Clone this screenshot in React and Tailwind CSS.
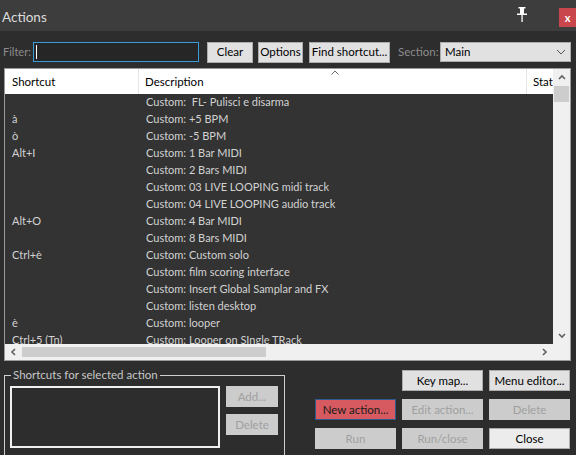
import React from "react";

const rows = [
  ["", "Custom:  FL- Pulisci e disarma"],
  ["à", "Custom: +5 BPM"],
  ["ò", "Custom: -5 BPM"],
  ["Alt+I", "Custom: 1 Bar MIDI"],
  ["", "Custom: 2 Bars MIDI"],
  ["", "Custom: 03 LIVE LOOPING midi track"],
  ["", "Custom: 04 LIVE LOOPING audio track"],
  ["Alt+O", "Custom: 4 Bar MIDI"],
  ["", "Custom: 8 Bars MIDI"],
  ["Ctrl+è", "Custom: Custom solo"],
  ["", "Custom: film scoring interface"],
  ["", "Custom: Insert Global Samplar and FX"],
  ["", "Custom: listen desktop"],
  ["è", "Custom: looper"],
  ["Ctrl+5 (Tn)", "Custom: Looper on SIngle TRack"],
];

const Chevron = ({ dir, className }) => {
  const paths = {
    up: "M1 5 L4 2 L7 5",
    down: "M1 2 L4 5 L7 2",
    left: "M5 1 L2 4 L5 7",
    right: "M2 1 L5 4 L2 7",
  };
  return (
    <svg width="8" height="8" viewBox="0 0 8 8" className={className}>
      <path d={paths[dir]} fill="none" stroke="#606060" strokeWidth="1.6" />
    </svg>
  );
};

const Btn = ({ children, disabled, variant, className = "" }) => {
  let style = "bg-[#e1e1e1] border-[#adadad] text-black";
  if (disabled) style = "bg-[#cccccc] border-[#cccccc] text-[#a0a0a0]";
  if (variant === "red") style = "bg-[#d65a60] border-[#2e5a8e] text-[#1a1a1a]";
  if (variant === "light") style = "bg-[#ececec] border-[#adadad] text-black";
  return (
    <div
      className={`flex items-center justify-center h-[21px] border text-[11.5px] leading-none whitespace-nowrap ${style} ${className}`}
    >
      {children}
    </div>
  );
};

export default function App() {
  return (
    <div
      className="w-[576px] h-[455px] bg-[#2d2d2d] flex flex-col overflow-hidden text-[11px]"
      style={{ fontFamily: 'Lato, "Liberation Sans", Arial, sans-serif' }}
    >
      {/* title bar */}
      <div className="h-[31px] bg-[#3d3d3d] flex items-start shrink-0">
        <div className="pl-[2px] pt-[7px] text-[13.5px] text-[#dcdcdc]">Actions</div>
        <div className="flex-1" />
        <svg width="12" height="15" viewBox="0 0 12 15" className="mt-[7px] mr-[31px]">
          <rect x="2.5" y="0" width="7" height="1.5" fill="#fff" />
          <rect x="4" y="1" width="4" height="6" fill="#fff" />
          <rect x="1" y="6.5" width="10" height="1.5" fill="#fff" />
          <rect x="5.4" y="8" width="1.3" height="7" fill="#fff" />
        </svg>
        <div className="mt-[8px] w-[17px] h-[19px] bg-[#c9474c] flex items-center justify-center text-white text-[11px] font-bold leading-none">
          x
        </div>
      </div>

      {/* filter row */}
      <div className="mt-[11px] h-[20px] flex items-center shrink-0 text-[11.5px]">
        <div className="pl-[3px] w-[33px] text-[11px] text-[#8c8c8c]">Filter:</div>
        <div className="w-[166px] h-[20px] border border-[#3c9ad6] bg-[#262626] flex items-center">
          <div className="ml-[2px] w-px h-[14px] bg-white" />
        </div>
        <Btn className="ml-[8px] w-[46px] h-[20px]">Clear</Btn>
        <Btn className="ml-[5px] w-[45px] h-[20px]">Options</Btn>
        <Btn className="ml-[6px] w-[81px] h-[20px]">Find shortcut...</Btn>
        <div className="ml-[8px] w-[42px] text-[#8c8c8c]">Section:</div>
        <div className="w-[131px] h-[20px] bg-[#e1e1e1] border border-[#adadad] flex items-center justify-between px-[4px]">
          <span className="text-black">Main</span>
          <svg width="10" height="6" viewBox="0 0 10 6">
            <path d="M1 1 L5 5 L9 1" fill="none" stroke="#555" strokeWidth="1" />
          </svg>
        </div>
      </div>

      {/* list */}
      <div className="mt-[6px] ml-[4px] w-[567px] h-[293px] border border-[#9a9a9a] bg-[#f0f0f0] flex flex-col shrink-0">
        <div className="flex flex-1 min-h-0">
          <div className="flex-1 flex flex-col min-w-0">
            <div className="h-[25px] bg-white flex items-center text-black shrink-0 relative text-[11.5px]">
              <div className="w-[134px] pl-[7px] border-r border-[#e5e5e5] h-full flex items-center">Shortcut</div>
              <div className="w-[388px] pl-[6px] border-r border-[#e5e5e5] h-full flex items-center">Description</div>
              <div className="pl-[6px] h-full flex items-center overflow-hidden">Stat</div>
              <svg width="8" height="5" viewBox="0 0 8 5" className="absolute left-[326px] top-[1px]">
                <path d="M0.5 4.5 L4 1 L7.5 4.5" fill="none" stroke="#6a6a6a" strokeWidth="1" />
              </svg>
            </div>
            <div className="flex-1 bg-[#333333] overflow-hidden">
              {rows.map((r, i) => (
                <div key={i} className="h-[17px] flex items-center text-[#d2d2d2]">
                  <div className="w-[134px] pl-[7px] whitespace-nowrap">{r[0]}</div>
                  <div className="pl-[7px] whitespace-pre">{r[1]}</div>
                </div>
              ))}
            </div>
          </div>
          {/* vertical scrollbar */}
          <div className="w-[17px] bg-[#f0f0f0] flex flex-col items-center">
            <div className="h-[17px] flex items-center justify-center">
              <Chevron dir="up" />
            </div>
            <div className="w-[15px] h-[16px] bg-[#cdcdcd]" />
            <div className="flex-1" />
            <div className="h-[17px] flex items-center justify-center">
              <Chevron dir="down" />
            </div>
          </div>
        </div>
        {/* horizontal scrollbar */}
        <div className="h-[16px] flex items-center shrink-0">
          <div className="w-[17px] flex items-center justify-center">
            <Chevron dir="left" />
          </div>
          <div className="w-[244px] h-[10px] bg-[#cdcdcd]" />
          <div className="flex-1" />
          <div className="w-[17px] flex items-center justify-center mr-[17px]">
            <Chevron dir="right" />
          </div>
        </div>
      </div>

      {/* bottom */}
      <div className="mt-[8px] flex items-start shrink-0">
        <div className="ml-[4px] mt-[6px] w-[281px] h-[85px] border border-[#cfcfcf] relative">
          <div className="absolute left-[6px] -top-[9px] px-[2px] bg-[#2d2d2d] text-[#c8c8c8] text-[11.5px] leading-[16px]">
            Shortcuts for selected action
          </div>
          <div className="flex mt-[10px] ml-[5px]">
            <div className="w-[210px] h-[62px] border-2 border-[#f0f0f0] bg-[#2d2d2d]" />
            <div className="ml-[6px] flex flex-col gap-[7px]">
              <Btn disabled className="w-[52px]">Add...</Btn>
              <Btn disabled className="w-[52px]">Delete</Btn>
            </div>
          </div>
        </div>
        <div className="ml-[30px] mt-[1px] grid content-start grid-cols-[81px_81px_81px] gap-x-[6px] gap-y-[8px]">
          <div />
          <Btn>Key map...</Btn>
          <Btn>Menu editor...</Btn>
          <Btn variant="red">New action...</Btn>
          <Btn disabled>Edit action...</Btn>
          <Btn disabled>Delete</Btn>
          <Btn disabled>Run</Btn>
          <Btn disabled>Run/close</Btn>
          <Btn variant="light">Close</Btn>
        </div>
      </div>
    </div>
  );
}
